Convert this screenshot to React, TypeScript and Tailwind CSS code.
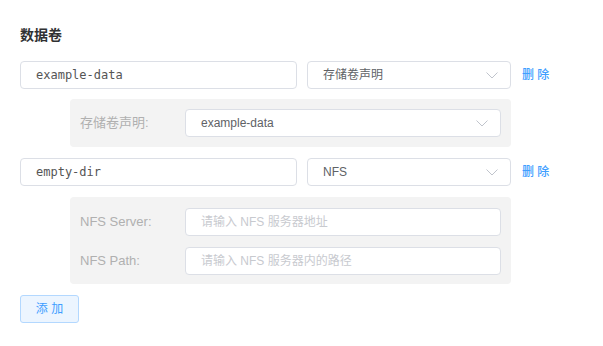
import React from "react";

const cjk = "font-['Liberation_Sans','Noto_Sans_CJK_SC',sans-serif]";
const mono = "font-['DejaVu_Sans_Mono','Noto_Sans_CJK_SC',monospace]";

function Chevron() {
  return (
    <svg width="12" height="7" viewBox="0 0 12 7" className="shrink-0">
      <path d="M0.5 0.5 L6 6 L11.5 0.5" fill="none" stroke="#c0c4cc" strokeWidth="1" />
    </svg>
  );
}

function TextBox({ value, className }: { value: string; className?: string }) {
  return (
    <div
      className={`flex h-[28px] items-center rounded-[4px] border border-[#dcdfe6] bg-white px-[15px] text-[12px] text-[#555] ${mono} ${className ?? ""}`}
    >
      {value}
    </div>
  );
}

function SelectBox({ value, className }: { value: string; className?: string }) {
  return (
    <div
      className={`flex h-[28px] items-center justify-between rounded-[4px] border border-[#dcdfe6] bg-white pl-[15px] pr-[12px] text-[12px] text-[#606266] ${cjk} ${className ?? ""}`}
    >
      <span>{value}</span>
      <Chevron />
    </div>
  );
}

function Placeholder({ text }: { text: string }) {
  return (
    <div
      className={`flex h-[28px] w-[316px] items-center rounded-[4px] border border-[#dcdfe6] bg-white px-[15px] text-[12px] text-[#c8cacf] ${cjk}`}
    >
      {text}
    </div>
  );
}

function VolumeRow({ name, type }: { name: string; type: string }) {
  return (
    <div className="flex items-center">
      <TextBox value={name} className="w-[277px]" />
      <SelectBox value={type} className="ml-[10px] w-[204px]" />
      <span className={`ml-[11px] text-[12px] font-medium text-[#409eff] ${cjk}`}>删 除</span>
    </div>
  );
}

function Label({ text }: { text: string }) {
  return <span className={`w-[105px] text-[13px] text-[#b0b0b0] ${cjk}`}>{text}</span>;
}

export default function App() {
  return (
    <div className="min-h-[346px] w-[603px] bg-white px-[20px] pt-[25px]">
      <h3 className={`text-[14px] font-bold leading-[20px] text-[#303133] ${cjk}`}>数据卷</h3>

      <div className="mt-[16px]">
        <VolumeRow name="example-data" type="存储卷声明" />
      </div>

      <div className="ml-[50px] mt-[10px] flex w-[441px] items-center rounded-[4px] bg-[#f3f3f3] py-[10px] pl-[10px]">
        <Label text="存储卷声明:" />
        <SelectBox value="example-data" className="w-[316px]" />
      </div>

      <div className="mt-[11px]">
        <VolumeRow name="empty-dir" type="NFS" />
      </div>

      <div className="ml-[50px] mt-[11px] flex w-[441px] flex-col gap-[11px] rounded-[4px] bg-[#f3f3f3] pb-[9px] pl-[10px] pt-[11px]">
        <div className="flex items-center">
          <Label text="NFS Server:" />
          <Placeholder text="请输入 NFS 服务器地址" />
        </div>
        <div className="flex items-center">
          <Label text="NFS Path:" />
          <Placeholder text="请输入 NFS 服务器内的路径" />
        </div>
      </div>

      <button
        className={`mt-[11px] flex h-[28px] w-[59px] items-center justify-center rounded-[3px] border border-[#b3d8ff] bg-[#ecf5ff] text-[12px] text-[#409eff] ${cjk}`}
      >
        添 加
      </button>
    </div>
  );
}
